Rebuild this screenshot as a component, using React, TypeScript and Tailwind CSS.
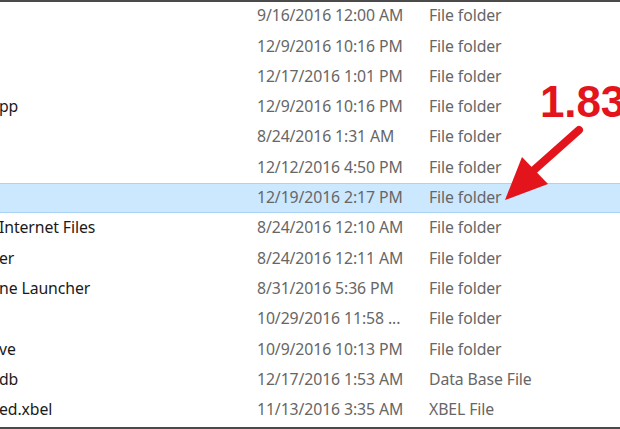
const rows = [
  { name: "", date: "9/16/2016 12:00 AM", type: "File folder" },
  { name: "", date: "12/9/2016 10:16 PM", type: "File folder" },
  { name: "", date: "12/17/2016 1:01 PM", type: "File folder" },
  { name: "pp", date: "12/9/2016 10:16 PM", type: "File folder" },
  { name: "", date: "8/24/2016 1:31 AM", type: "File folder" },
  { name: "", date: "12/12/2016 4:50 PM", type: "File folder" },
  { name: "", date: "12/19/2016 2:17 PM", type: "File folder", selected: true },
  { name: "Internet Files", date: "8/24/2016 12:10 AM", type: "File folder" },
  { name: "er", date: "8/24/2016 12:11 AM", type: "File folder" },
  { name: "ne Launcher", date: "8/31/2016 5:36 PM", type: "File folder" },
  { name: "", date: "10/29/2016 11:58 ...", type: "File folder" },
  { name: "ve", date: "10/9/2016 10:13 PM", type: "File folder" },
  { name: "db", date: "12/17/2016 1:53 AM", type: "Data Base File" },
  { name: "ed.xbel", date: "11/13/2016 3:35 AM", type: "XBEL File" },
];

export default function App() {
  return (
    <div className="relative w-[620px] h-[429px] overflow-hidden bg-white border-t-2 border-b-2 border-[#4a4a4a] font-['Noto_Sans',sans-serif] text-[15.8px] tracking-[-0.1px]">
      <div className="flex flex-col -mt-[1px]">
        {rows.map((r, i) => (
          <div
            key={i}
            className={`flex h-[30.3px] items-center border-y ${
              r.selected ? "bg-[#cce8ff] border-[#a9d4f5]" : "border-transparent"
            }`}
          >
            <div className="w-[258px] shrink-0 text-[#1a1a1a] -ml-[1px]">{r.name}</div>
            <div className="w-[172px] shrink-0 text-[#666666] whitespace-nowrap">{r.date}</div>
            <div className="text-[#666666] whitespace-nowrap">{r.type}</div>
          </div>
        ))}
      </div>

      {/* annotation */}
      <div className="absolute left-[540px] top-[78px] font-['Liberation_Sans',sans-serif] font-bold text-[44px] leading-none text-[#e3141b] whitespace-nowrap">
        1.83
      </div>
      <svg className="absolute left-0 top-0" width="620" height="429" viewBox="0 0 620 429">
        <line x1="579" y1="128" x2="534" y2="168" stroke="#e3141b" strokeWidth="8" strokeLinecap="round" />
        <polygon points="505,198 522,155 548,182" fill="#e3141b" />
      </svg>
    </div>
  );
}
